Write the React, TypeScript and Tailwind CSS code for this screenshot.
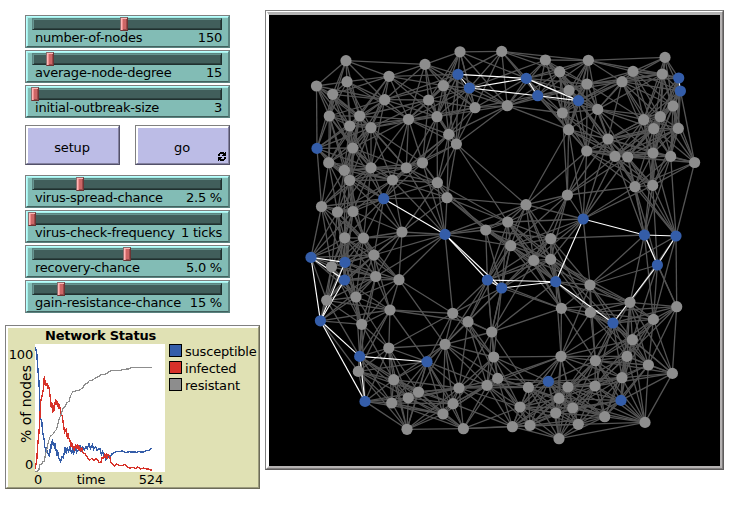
import React from 'react';

type Pt = [number, number];

const resistantNodes: Pt[] = [
  [346, 60.7], [316.5, 86], [347, 81.7], [332.7, 94.3], [389, 76.3], [384.7, 99.7], [329.3, 116], [359.7, 116],
  [349.7, 126], [371, 127.7], [408.5, 119.3], [352.7, 148], [328.7, 162.7], [344.3, 170.3], [349.7, 180.3],
  [371, 167.8], [406.3, 167.8], [422.5, 162.8], [392.5, 180], [321.5, 206.5], [337.5, 212], [353, 211.5],
  [402, 232], [344.7, 237.8], [363.5, 238], [374, 255], [331.5, 266.8], [375.7, 276.5], [399, 279.7],
  [326.7, 300.3], [356, 297], [390, 310], [361.7, 324.3], [388.8, 348], [358.3, 371.4], [393.7, 379.7],
  [418.5, 392], [408.3, 397.8], [391.7, 403], [407, 429.3], [425, 64.4], [460, 51.8], [501.7, 51.4],
  [545.4, 60], [559.7, 71.7], [569, 90.4], [443.4, 85.7], [428.6, 100], [475, 107.7], [507.3, 105.7],
  [562.4, 113], [437, 116.7], [568.6, 129.7], [448.7, 134.4], [456.4, 144], [588.4, 60.3], [665, 57.4],
  [633, 71.4], [662.3, 74], [587, 84], [622, 81.7], [673, 106], [597.7, 109.4], [660.3, 116.7],
  [643.7, 119.7], [653.7, 128.7], [678.3, 128.4], [608, 139], [586.7, 151], [615, 156.4], [627.7, 157],
  [653, 153], [670.7, 156.4], [694.6, 162.5], [437.4, 182.7], [447, 197.7], [526, 204.7], [567.4, 195],
  [507.7, 222], [485.7, 230], [550.7, 238.7], [510.7, 245.7], [533.7, 260.4], [550.7, 259.4], [561.4, 308.3],
  [452.7, 313.3], [468, 321.7], [635, 186.7], [652.7, 185.4], [590, 285], [630, 302.3], [590.4, 312.4],
  [676.7, 306.7], [653.4, 319.4], [491.7, 332], [445, 344.3], [493.7, 357], [561, 356.3], [497.7, 378.4],
  [487, 385.4], [459, 388], [528.4, 387.4], [568, 387], [453, 403.7], [443, 414], [559, 398.4], [520, 407],
  [555.7, 413], [572.7, 408], [463.4, 428.7], [512.4, 426.7], [530, 425.4], [578.3, 424.3], [559, 438.7],
  [632.4, 339.7], [627, 356.4], [595.4, 360.7], [648.4, 365], [672.4, 373.4], [622, 377.7], [595, 386],
  [604.7, 416.7], [645, 422.4],
];

const susceptibleNodes: Pt[] = [
  [317, 148.4], [383.7, 198.7], [311, 257.4], [345, 262.4], [344.5, 280], [320.4, 320.8], [359.7, 356.4],
  [365, 401.4], [458, 74.4], [469.4, 88], [526.3, 78.4], [537.7, 95.7], [578.5, 100.6], [678.7, 78],
  [680.4, 91], [445, 234.4], [583.2, 219], [487.4, 280], [501.7, 288], [555.7, 281.7], [644.4, 235],
  [676, 236], [657.4, 265], [613, 323], [427, 361.7], [548.4, 381.4], [621, 400.4],
];

// Pairs of indexes into susceptibleNodes whose link is still active.
const activeLinks: Pt[] = [
  [2, 3], [2, 4], [2, 5], [5, 3], [5, 4], [5, 6], [5, 7], [6, 7], [6, 24], [1, 15], [15, 17], [15, 18],
  [17, 18], [17, 19], [18, 19], [19, 16], [16, 20], [20, 21], [20, 22], [21, 22], [22, 23], [19, 23],
  [8, 10], [8, 9], [9, 10], [9, 11], [10, 11], [10, 12], [11, 12], [13, 14],
];

// Links that cross the sparse regions of the network.
const longLinks: [number, number, number, number][] = [
  [346, 60.7, 425, 64.4], [588.4, 60.3, 665, 57.4], [501.7, 51.4, 588.4, 60.3], [456.4, 144, 526, 204.7],
  [568.6, 129.7, 526, 204.7], [568.6, 129.7, 567.4, 195], [447, 197.7, 526, 204.7], [437.4, 182.7, 485.7, 230],
  [437.4, 182.7, 507.7, 222], [447, 197.7, 510.7, 245.7], [445, 234.4, 452.7, 313.3], [445, 234.4, 507.7, 222],
  [445, 234.4, 526, 204.7], [445, 234.4, 510.7, 245.7], [507.3, 105.7, 448.7, 134.4], [507.3, 105.7, 456.4, 144],
  [507.3, 105.7, 568.6, 129.7], [507.3, 105.7, 562.4, 113], [583.2, 219, 590, 285], [644.4, 235, 590, 285],
  [644.4, 235, 630, 302.3], [644.4, 235, 653.4, 319.4], [676, 236, 676.7, 306.7], [676, 236, 653.4, 319.4],
  [657.4, 265, 676.7, 306.7], [694.6, 162.5, 676, 236], [670.7, 156.4, 676, 236], [652.7, 185.4, 676, 236],
  [635, 186.7, 676, 236], [635, 186.7, 583.2, 219], [652.7, 185.4, 583.2, 219], [635, 186.7, 567.4, 195],
  [652.7, 185.4, 657.4, 265], [493.7, 357, 561, 356.3], [501.7, 288, 561.4, 308.3], [501.7, 288, 491.7, 332],
  [487.4, 280, 491.7, 332], [501.7, 288, 493.7, 357], [561.4, 308.3, 561, 356.3], [555.7, 281.7, 561, 356.3],
  [493.7, 357, 548.4, 381.4], [491.7, 332, 528.4, 387.4], [561, 356.3, 497.7, 378.4], [561, 356.3, 487, 385.4],
  [399, 279.7, 452.7, 313.3], [399, 279.7, 445, 234.4], [390, 310, 452.7, 313.3], [375.7, 276.5, 445, 234.4],
  [374, 255, 445, 234.4], [402, 232, 445, 234.4], [399, 279.7, 445, 344.3], [407, 429.3, 463.4, 428.7],
  [463.4, 428.7, 512.4, 426.7], [645, 422.4, 578.3, 424.3], [645, 422.4, 604.7, 416.7], [645, 422.4, 672.4, 373.4],
  [645, 422.4, 648.4, 365], [645, 422.4, 621, 400.4], [645, 422.4, 622, 377.7], [672.4, 373.4, 621, 400.4],
  [672.4, 373.4, 676.7, 306.7], [672.4, 373.4, 653.4, 319.4], [317, 148.4, 316.5, 86], [317, 148.4, 321.5, 206.5],
  [365, 401.4, 407, 429.3], [597.7, 109.4, 643.7, 119.7], [597.7, 109.4, 653.7, 128.7], [622, 81.7, 643.7, 119.7],
  [622, 81.7, 597.7, 109.4], [583.2, 219, 586.7, 151], [583.2, 219, 608, 139], [583.2, 219, 627.7, 157],
  [615, 156.4, 567.4, 195], [583.2, 219, 526, 204.7], [583.2, 219, 507.7, 222],
];

const TOTAL_LINKS = 1125;

function buildLinks(): [number, number][] {
  const all = [...resistantNodes, ...susceptibleNodes];
  const firstSusceptible = resistantNodes.length;
  const indexOf = (x: number, y: number) =>
    all.reduce((best, p, i) => (Math.hypot(p[0] - x, p[1] - y) < Math.hypot(all[best][0] - x, all[best][1] - y) ? i : best), 0);
  const used = new Set<number>();
  const links: [number, number][] = [];
  const connect = (a: number, b: number) => {
    const key = Math.min(a, b) * 1000 + Math.max(a, b);
    if (a === b || used.has(key)) return false;
    used.add(key);
    links.push([a, b]);
    return true;
  };
  longLinks.forEach(([x1, y1, x2, y2]) => connect(indexOf(x1, y1), indexOf(x2, y2)));
  const nearest = all.map((p, i) =>
    all
      .map((q, j) => ({ j, d: Math.hypot(p[0] - q[0], p[1] - q[1]) }))
      .filter(({ j }) => j !== i && !(i >= firstSusceptible && j >= firstSusceptible))
      .sort((a, b) => a.d - b.d)
      .map(({ j }) => j),
  );
  // Every node in turn links to its closest node that it has no link with yet,
  // with an occasional turn skipped so that the degrees vary.
  let seed = 20;
  while (links.length < TOTAL_LINKS - activeLinks.length) {
    for (let i = 0; i < all.length && links.length < TOTAL_LINKS - activeLinks.length; i++) {
      seed = (seed * 16807) % 2147483647;
      if (seed % 4 === 0) continue;
      for (const j of nearest[i]) if (connect(i, j)) break;
    }
  }
  return links;
}

const everyNode = [...resistantNodes, ...susceptibleNodes];
const dimLinks = buildLinks();

function Slider({ name, value, thumb }: { name: string; value: string; thumb: number }) {
  return (
    <div className="h-[33px] w-[205px] border border-t-[#808080] border-l-[#808080] border-r-[#5b8380] border-b-[#5b8380]">
      <div className="h-[31px] border border-t-[#b9ffff] border-l-[#b9ffff] border-r-[#5b8380] border-b-[#41605d] bg-[#82bcb5] pl-[5px] pr-[6px] pt-px shadow-[inset_1px_1px_0_#a6f0e9]">
        <div className="relative h-3 w-[190px] border border-t-[#5b8380] border-l-[#5b8380] border-r-[#20302f] border-b-[#20302f] bg-[#415e5b] shadow-[inset_1px_1px_0_#669590,inset_-1px_-1px_0_#2d413f]">
          <div
            className="absolute -top-[2px] h-[14px] w-2 border border-t-[#8a6e6e] border-l-[#8a6e6e] border-r-[#6c3434] border-b-[#6c3434] bg-[#cc6666] shadow-[inset_1px_1px_0_#ffb6b6,inset_2px_0_0_#f08e8e,inset_-1px_-1px_0_#9a4a4a]"
            style={{ left: thumb - 33 }}
          />
        </div>
        <div className="flex h-[15px] justify-between pl-[3px] text-[13px] leading-[15px] tracking-[-0.22px]">
          <span className="whitespace-pre">{name}</span>
          <span className="whitespace-pre">{value}</span>
        </div>
      </div>
    </div>
  );
}

function Button({ label, forever }: { label: string; forever?: boolean }) {
  return (
    <div className="relative h-10 w-[95px] border border-t-[#808080] border-l-[#808080] border-r-[#53516a] border-b-[#53516a]">
      <div className="flex h-full items-center justify-center border border-t-white border-l-white border-r-[#83819f] border-b-[#83819f] bg-[#bcbce6] pt-[7px] pr-px pb-[1px] text-[13px] leading-4 tracking-[-0.15px] shadow-[inset_1px_1px_0_#fff]">
        {label}
      </div>
      {forever && (
        <svg className="absolute right-[3px] bottom-[3px]" width="8" height="9" viewBox="0 0 8 9" shapeRendering="crispEdges">
          <path d="M2 0H6V1H7V0H8V4H4V3H5V2H2V4H0V2H1V1H2Z M6 9H2V8H1V9H0V5H4V6H3V7H6V5H8V7H7V8H6Z" fill="#000" />
        </svg>
      )}
    </div>
  );
}

const susceptibleCurve =
  '106,82 110,97 113,140 117,188 120,250 120,292 125,302 128,337 133,363 133,382 137,384 137,398 139,380 140,390 143,397 145,404 148,408 150,394 152,373 153,388 155,381 157,358 158,375 161,365 161,378 165,370 165,388 167,384 170,400 173,392 175,410 177,416 181,424 183,418 183,424 186,410 190,414 193,398 193,405 195,382 199,402 202,383 206,395 210,381 215,401 218,384 221,400 224,394 228,375 231,396 234,391 240,378 245,396 248,382 253,390 258,379 262,386 267,372 272,386 277,375 281,388 287,380 291,391 295,387 300,386 304,403 308,394 312,411 315,404 318,419 322,408 327,412 333,408 336,402 343,397 352,394 361,395 365,392 371,395 380,398 388,394 395,397 402,396 410,397 416,394 424,396 432,396 440,391 448,391 455,385';
const infectedCurve =
  '105,446 110,425 113,377 117,338 120,285 122,246 127,223 130,210 133,168 134,194 136,180 139,199 141,190 143,206 145,195 149,211 149,232 151,228 154,264 156,250 158,280 160,254 162,272 164,258 167,238 170,255 173,243 175,266 177,252 181,268 183,284 187,288 190,312 194,337 199,328 202,354 205,347 207,356 210,361 213,382 216,370 220,385 223,389 227,372 230,387 233,372 235,390 238,377 241,397 245,380 247,397 255,401 260,409 266,419 270,420 276,414 282,421 288,416 293,420 298,428 303,426 306,414 311,415 314,400 317,414 319,398 321,416 324,404 329,408 333,428 339,432 344,439 350,432 357,437 365,437 374,433 380,440 389,444 398,442 407,445 414,441 421,447 430,444 442,447 452,448 455,454';
const resistantCurve =
  '105,455 112,455 117,448 119,434 125,432 128,426 133,423 136,405 140,390 143,376 147,360 151,348 158,344 164,334 170,328 174,310 178,296 184,281 190,263 196,259 201,248 207,244 211,229 218,215 225,213 240,210 249,202 253,195 263,188 269,181 279,180 287,173 297,169 305,163 318,162 326,156 335,151 365,151 367,148 385,147 397,142 455,142';

const pens = [
  { name: 'susceptible', swatch: 'bg-[#345da9]', stroke: '#345da9', points: susceptibleCurve, width: 4.2 },
  { name: 'infected', swatch: 'bg-[#d73229]', stroke: '#d73229', points: infectedCurve, width: 4.2 },
  { name: 'resistant', swatch: 'bg-[#8d8d8d]', stroke: '#8d8d8d', points: resistantCurve, width: 3.6 },
];

function Plot() {
  return (
    <div className="h-[164px] w-[255px] border border-t-[#808080] border-l-[#808080] border-r-[#6c6b58] border-b-[#6c6b58]">
      <div className="flex h-full border border-t-white border-l-white border-r-[#9c9b7e] border-b-[#9c9b7e] bg-[#e0e1b4] shadow-[inset_1px_1px_0_#fff]">
        <div className="w-[158px]">
          <div className="h-[17px] pl-[29px] text-center text-[13px] leading-[18px] font-bold tracking-[-0.22px] whitespace-nowrap">Network Status</div>
          <div className="flex h-[128px]">
            <div className="relative w-7 text-right text-[13px] leading-4 tracking-[-0.2px]">
              <div className="pt-[3px] pr-[2px]">100</div>
              <div className="pt-[94px] pr-[2px]">0</div>
              <div className="absolute top-[52px] left-[-21px] w-20 -rotate-90 text-center text-[14px] tracking-normal whitespace-nowrap">% of nodes</div>
            </div>
            <svg className="bg-white" width="130" height="128" viewBox="105 72 390 384" fill="none" shapeRendering="crispEdges">
              {pens.map((pen) => (
                <polyline key={pen.name} points={pen.points} stroke={pen.stroke} strokeWidth={pen.width} />
              ))}
            </svg>
          </div>
          <div className="flex justify-between pr-[2px] pl-[27px] text-[13px] leading-[15px] tracking-[-0.2px]">
            <span>0</span>
            <span className="pl-px">time</span>
            <span>524</span>
          </div>
        </div>
        <div className="flex flex-col gap-1 pt-[17px] pl-1">
          {pens.map((pen) => (
            <div key={pen.name} className="flex h-[13px] items-center gap-[3px] text-[13px] leading-[13px] tracking-[-0.2px]">
              <span className={`h-[13px] w-[13px] shrink-0 border border-black ${pen.swatch}`} />
              <span className="pt-[2px]">{pen.name}</span>
            </div>
          ))}
        </div>
      </div>
    </div>
  );
}

function NetworkView() {
  return (
    <div className="mt-[10px] h-[460px] w-[459px] border border-t-[#808080] border-l-[#808080] border-r-[#5f5d5d] border-b-[#5f5d5d]">
      <div className="h-full border border-t-white border-l-white border-r-[#807d7d] border-b-[#807d7d]">
        <div className="h-full border-t-[3px] border-r-2 border-b-2 border-l-2 border-t-[#b3b3b3] border-l-white border-r-[#b5b2b2] border-b-[#b5b2b2] bg-black">
          <svg width="451" height="451" viewBox="269 15 451 451" className="block">
            <g stroke="#545454" strokeWidth="1.3">
              {dimLinks.map(([a, b]) => (
                <line key={`${a}-${b}`} x1={everyNode[a][0]} y1={everyNode[a][1]} x2={everyNode[b][0]} y2={everyNode[b][1]} />
              ))}
            </g>
            <g stroke="#fff" strokeWidth="1.15">
              {activeLinks.map(([a, b]) => (
                <line
                  key={`${a}-${b}`}
                  x1={susceptibleNodes[a][0]}
                  y1={susceptibleNodes[a][1]}
                  x2={susceptibleNodes[b][0]}
                  y2={susceptibleNodes[b][1]}
                />
              ))}
            </g>
            <g fill="#8d8d8d">
              {resistantNodes.map(([x, y]) => (
                <circle key={`${x}-${y}`} cx={x} cy={y} r="5.6" />
              ))}
            </g>
            <g fill="#345da9">
              {susceptibleNodes.map(([x, y]) => (
                <circle key={`${x}-${y}`} cx={x} cy={y} r="5.6" />
              ))}
            </g>
          </svg>
        </div>
      </div>
    </div>
  );
}

export default function App() {
  return (
    <div className="flex h-[506px] w-[741px] overflow-hidden bg-white font-['DejaVu_Sans',sans-serif] text-black">
      <div className="w-[265px] shrink-0 pt-[15px]">
        <div className="flex flex-col gap-[2px] pl-[25px]">
          <Slider name="number-of-nodes" value="150" thumb={120} />
          <Slider name="average-node-degree" value="15" thumb={46} />
          <Slider name="initial-outbreak-size" value="3" thumb={31} />
        </div>
        <div className="flex gap-[15px] pt-[7px] pb-[10px] pl-[25px]">
          <Button label="setup" />
          <Button label="go" forever />
        </div>
        <div className="flex flex-col gap-[2px] pl-[25px]">
          <Slider name="virus-spread-chance" value="2.5 %" thumb={76} />
          <Slider name="virus-check-frequency" value="1 ticks" thumb={28} />
          <Slider name="recovery-chance" value="5.0 %" thumb={123} />
          <Slider name="gain-resistance-chance" value="15 %" thumb={57} />
        </div>
        <div className="pt-3 pl-[5px]">
          <Plot />
        </div>
      </div>
      <NetworkView />
    </div>
  );
}
